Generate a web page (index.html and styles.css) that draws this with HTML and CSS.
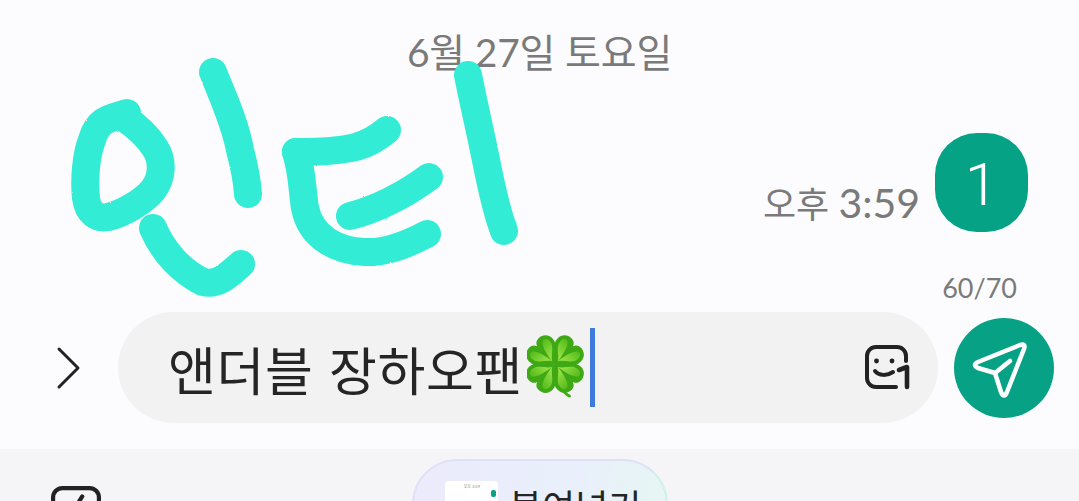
FILE: index.html
```html
<!DOCTYPE html>
<html lang="ko">
<head>
  <meta charset="UTF-8">
  <meta name="viewport" content="width=device-width, initial-scale=1.0">
  <title>메시지</title>
  <link rel="stylesheet" href="styles.css">
</head>
<body>
  <div class="screen">
    <!-- 대화 영역 -->
    <main class="chat">
      <div class="date">6월 27일 토요일</div>

      <div class="message-row">
        <span class="time">오후 <span class="time-num">3:59</span></span>
        <div class="badge">1</div>
      </div>

      <div class="counter">60/70</div>

      <div class="compose">
        <svg class="chevron" viewBox="0 0 30 48" aria-hidden="true">
          <path d="M5 5 L24 24 L5 43"/>
        </svg>

        <div class="input-pill">
          <span class="input-text">앤더블 장하오팬</span>
          <svg class="clover" viewBox="0 0 60 68" aria-hidden="true">
            <defs>
              <linearGradient id="leafGrad" x1="0" y1="0" x2="0" y2="1">
                <stop offset="0" stop-color="#55bb1c"/>
                <stop offset="1" stop-color="#a4e84e"/>
              </linearGradient>
              <path id="leaf" d="M0 0 C-6 -6 -17 -11 -17 -21 C-17 -28 -11 -31 -7 -31 C-3 -31 -1 -29 0 -26 C1 -29 3 -31 7 -31 C11 -31 17 -28 17 -21 C17 -11 6 -6 0 0Z"/>
              <path id="leafIn" d="M0 -4 C-3 -10 -13 -13 -13 -21 C-13 -25 -10 -27 -8 -26 C-4 -24 -1 -14 0 -4 C1 -14 4 -24 8 -26 C10 -27 13 -25 13 -21 C13 -13 3 -10 0 -4Z"/>
            </defs>
            <path class="stem" d="M30 30 C31 46 36 60 44 63"/>
            <g transform="translate(29 30)">
              <g transform="rotate(45)"><use href="#leaf" fill="#3fa815"/><use href="#leafIn" fill="url(#leafGrad)"/></g>
              <g transform="rotate(135)"><use href="#leaf" fill="#3fa815"/><use href="#leafIn" fill="url(#leafGrad)"/></g>
              <g transform="rotate(225)"><use href="#leaf" fill="#3fa815"/><use href="#leafIn" fill="url(#leafGrad)"/></g>
              <g transform="rotate(315)"><use href="#leaf" fill="#3fa815"/><use href="#leafIn" fill="url(#leafGrad)"/></g>
            </g>
          </svg>
          <span class="cursor"></span>
          <svg class="sticker" viewBox="0 0 48 48" aria-hidden="true">
            <path d="M32 43 H12 a9 9 0 0 1 -9 -9 V12 a9 9 0 0 1 9 -9 H33 a9 9 0 0 1 9 9 V17"/>
            <circle class="dot" cx="12.5" cy="17" r="2.4"/>
            <circle class="dot" cx="28" cy="17" r="2.4"/>
            <path d="M11 27 C15 32 23 32 29 28"/>
            <path class="sticker-one" d="M35 26 L43 23 V43"/>
          </svg>
        </div>

        <button class="send" type="button" aria-label="보내기">
          <svg viewBox="0 0 100 100" aria-hidden="true">
            <path d="M66 27 L24 44 Q18 47 24 50 L41 55 L47 74 Q50 81 53 74 L70 31 Q72 25 66 27Z"/>
            <path d="M41 55 L56 43"/>
          </svg>
        </button>
      </div>

      <!-- 손글씨 -->
      <svg class="drawing" viewBox="0 0 1079 449" aria-hidden="true">
        <defs>
          <filter id="rough" filterUnits="userSpaceOnUse" x="0" y="0" width="1079" height="449">
            <feTurbulence type="fractalNoise" baseFrequency="0.8" numOctaves="2" seed="4"/>
            <feDisplacementMap in="SourceGraphic" scale="1.6"/>
          </filter>
        </defs>
        <g filter="url(#rough)">
          <path d="M127 113 C112 118 98 118 92 140 C86 155 84 180 86 198 C88 213 97 219 108 217 C125 213 145 200 153 190 C163 177 163 160 155 148 C147 135 135 125 123 117"/>
          <path d="M213 72 C222 95 235 122 240 150 C244 165 247 180 248 194"/>
          <path d="M153 228 C163 252 182 272 203 282 C218 286 230 274 241 264"/>
          <path d="M296 152 C320 152 340 151 356 147 C370 143 380 136 387 130"/>
          <path d="M296 152 C303 175 302 190 305 208 C311 238 338 251 365 252 C385 253 410 243 427 234"/>
          <path d="M350 216 C375 210 405 195 429 177"/>
          <path d="M468 75 C475 110 480 130 487 165 C492 190 498 215 504 231"/>
        </g>
      </svg>
    </main>

    <!-- 하단 툴바 -->
    <footer class="toolbar">
      <div class="tool-icon">
        <svg viewBox="0 0 48 48" aria-hidden="true">
          <rect x="2" y="2" width="44" height="44" rx="9"/>
          <path d="M30 10 L20 26"/>
        </svg>
      </div>
      <div class="paste-pill">
        <div class="thumb">
          <span class="thumb-line">오후 3:59</span>
          <span class="thumb-dot"></span>
        </div>
        <span class="paste-label">붙여넣기</span>
      </div>
    </footer>
  </div>
</body>
</html>
```

FILE: styles.css
```css
* {
  margin: 0;
  padding: 0;
  box-sizing: border-box;
}

body {
  background: #fcfcfe;
  overflow: hidden;
}

.screen {
  width: 1079px;
  height: 501px;
  overflow: hidden;
  font-family: "Lato", "Noto Sans CJK KR", sans-serif;
}

.chat {
  position: relative;
  height: 449px;
  padding-top: 26px;
  display: flex;
  flex-direction: column;
}

.date {
  height: 52px;
  line-height: 52px;
  text-align: center;
  font-size: 39px;
  font-weight: 400;
  letter-spacing: -0.2px;
  color: #7a7a7a;
}

.message-row {
  margin-top: 55px;
  height: 99px;
  padding-right: 51px;
  display: flex;
  justify-content: flex-end;
  align-items: flex-end;
  gap: 15px;
}

.time {
  font-size: 36px;
  font-weight: 400;
  line-height: 50px;
  color: #7a7a7a;
  margin-bottom: 3px;
}

.time-num {
  font-size: 41px;
}

.badge {
  width: 93px;
  height: 99px;
  padding-top: 3px;
  border-radius: 42px;
  background: #05a286;
  color: #fff;
  font-family: "Roboto", sans-serif;
  font-size: 60px;
  font-weight: 300;
  display: flex;
  align-items: center;
  justify-content: center;
}

.counter {
  margin-top: 38px;
  height: 36px;
  line-height: 36px;
  padding-right: 62px;
  text-align: right;
  font-size: 27px;
  font-weight: 400;
  color: #7a7a7a;
}

.compose {
  margin-top: 6px;
  height: 111px;
  display: flex;
  align-items: center;
  padding-left: 54px;
}

.chevron {
  width: 30px;
  height: 48px;
  margin-right: 34px;
  flex: none;
}

.chevron path {
  fill: none;
  stroke: #222;
  stroke-width: 3;
  stroke-linecap: round;
  stroke-linejoin: round;
}

.input-pill {
  width: 820px;
  height: 111px;
  border-radius: 56px;
  background: #f2f2f3;
  padding-left: 50px;
  padding-right: 26px;
  display: flex;
  align-items: center;
  flex: none;
}

.input-text {
  font-family: "Noto Sans CJK KR", sans-serif;
  font-size: 52px;
  font-weight: 400;
  letter-spacing: 0.7px;
  color: #252525;
  white-space: nowrap;
  margin-top: 2px;
}

.clover {
  width: 58px;
  height: 66px;
  margin-left: 4px;
  flex: none;
}

.stem {
  fill: none;
  stroke: #46ad16;
  stroke-width: 3;
  stroke-linecap: round;
}

.cursor {
  width: 5px;
  height: 79px;
  background: #3f7bdc;
  margin-left: 5px;
  flex: none;
}

.sticker {
  width: 48px;
  height: 48px;
  margin-left: auto;
  flex: none;
}

.sticker path {
  fill: none;
  stroke: #222;
  stroke-width: 4;
  stroke-linecap: round;
  stroke-linejoin: round;
}

.sticker .sticker-one {
  stroke-width: 4.6;
}

.sticker .dot {
  fill: #222;
}

.send {
  width: 100px;
  height: 100px;
  border: none;
  border-radius: 50%;
  background: #07a286;
  margin-left: 16px;
  flex: none;
}

.send svg {
  display: block;
  width: 100px;
  height: 100px;
}

.send path {
  fill: none;
  stroke: #fff;
  stroke-width: 4.5;
  stroke-linecap: round;
  stroke-linejoin: round;
}

.drawing {
  position: absolute;
  left: 0;
  top: 0;
  width: 1079px;
  height: 449px;
  pointer-events: none;
}

.drawing path {
  fill: none;
  stroke: #32ecd6;
  stroke-width: 28;
  stroke-linecap: round;
  stroke-linejoin: round;
}

.toolbar {
  height: 52px;
  background: #f5f5f7;
  position: relative;
  display: flex;
  overflow: hidden;
}

.tool-icon {
  width: 50px;
  height: 50px;
  margin: 37px 0 0 51px;
  flex: none;
}

.tool-icon svg {
  display: block;
  width: 50px;
  height: 50px;
}

.tool-icon rect,
.tool-icon path {
  fill: none;
  stroke: #222;
  stroke-width: 4;
  stroke-linecap: round;
}

.paste-pill {
  width: 256px;
  height: 90px;
  margin: 10px 0 0 311px;
  border-radius: 45px;
  border: 2px solid #e0e0f6;
  border-right-color: #d0efe8;
  background: linear-gradient(100deg, #ecebfb 0%, #e9effb 60%, #e6f6f3 100%);
  padding: 20px 0 0 31px;
  display: flex;
  gap: 11px;
  flex: none;
}

.thumb {
  position: relative;
  width: 53px;
  height: 60px;
  background: #fff;
  border-radius: 4px 4px 0 0;
  flex: none;
}

.thumb-line {
  position: absolute;
  top: 3px;
  right: 18px;
  font-size: 4px;
  line-height: 5px;
  color: #888;
  white-space: nowrap;
}

.thumb-dot {
  position: absolute;
  top: 9px;
  right: 2px;
  width: 5px;
  height: 7px;
  border-radius: 2px;
  background: #07a286;
}

.paste-label {
  font-family: "Noto Sans CJK KR", sans-serif;
  font-size: 36px;
  line-height: 40px;
  margin-top: 4px;
  color: #252525;
  white-space: nowrap;
}
```
